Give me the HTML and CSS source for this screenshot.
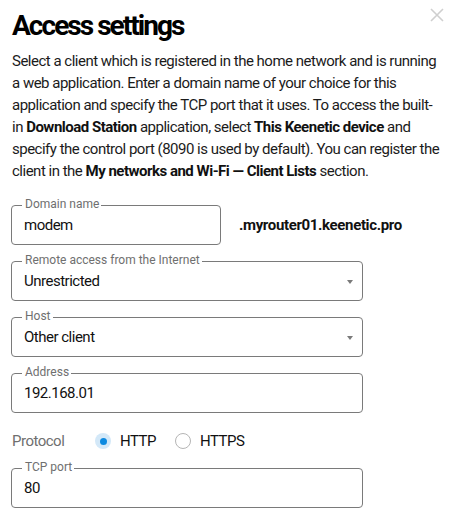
FILE: index.html
```html
<!DOCTYPE html>
<html>
<head>
<meta charset="utf-8">
<link rel="stylesheet" href="styles.css">
</head>
<body>
<div class="dialog">
  <button class="close" aria-label="Close">
    <svg width="14" height="14" viewBox="0 0 14 14"><path d="M1 1L13 13M13 1L1 13" stroke="#cfcfcf" stroke-width="1.6"/></svg>
  </button>
  <h1 class="title">Access settings</h1>
  <p class="intro">Select a client which is registered in the home network and is running a web application. Enter a domain name of your choice for this application and specify the TCP port that it uses. To access the built-in <b>Download Station</b> application, select <b>This Keenetic device</b> and specify the control port (8090 is used by default). You can register the client in the <b>My networks and Wi-Fi — Client Lists</b> section.</p>

  <div class="form">
    <div class="row">
      <div class="field field-short">
        <span class="label">Domain name</span>
        <span class="value">modem</span>
      </div>
      <span class="suffix">.myrouter01.keenetic.pro</span>
    </div>
    <div class="field field-select">
      <span class="label">Remote access from the Internet</span>
      <span class="value">Unrestricted</span>
      <span class="arrow"></span>
    </div>
    <div class="field field-select">
      <span class="label">Host</span>
      <span class="value">Other client</span>
      <span class="arrow"></span>
    </div>
    <div class="field">
      <span class="label">Address</span>
      <span class="value">192.168.01</span>
    </div>
    <div class="protocol">
      <span class="protocol-label">Protocol</span>
      <span class="radio radio-on"><span class="dot"></span></span>
      <span class="radio-text">HTTP</span>
      <span class="radio radio-off"></span>
      <span class="radio-text">HTTPS</span>
    </div>
    <div class="field">
      <span class="label">TCP port</span>
      <span class="value">80</span>
    </div>
  </div>
</div>
</body>
</html>
```

FILE: styles.css
```css
html, body {
  margin: 0;
  padding: 0;
  background: #fff;
}
body {
  font-family: Roboto, "Liberation Sans", sans-serif;
  color: #1b1b1b;
  width: 453px;
  height: 516px;
  overflow: hidden;
}
.dialog {
  position: relative;
  padding: 9px 12px 0 12px;
}
.close {
  position: absolute;
  top: 8px;
  right: 9px;
  border: 0;
  background: none;
  padding: 0;
  width: 14px;
  height: 14px;
  display: block;
}
.close svg { display: block; }
.title {
  margin: 0;
  font-size: 28px;
  line-height: 34px;
  font-weight: 700;
  letter-spacing: -1.95px;
  color: #000;
}
.intro {
  margin: 7px 0 0 0;
  font-size: 15px;
  line-height: 22px;
  letter-spacing: -0.5px;
  color: #1b1b1b;
}
.intro b {
  font-weight: 700;
  color: #111;
}
.form {
  margin-top: 23px;
  margin-left: -1px;
  display: flex;
  flex-direction: column;
  gap: 16px;
}
.row {
  display: flex;
  align-items: center;
  gap: 18px;
}
.field {
  position: relative;
  box-sizing: border-box;
  width: 352px;
  height: 40px;
  border: 1px solid #7a7a7a;
  border-radius: 4px;
  padding: 0 12px;
  display: flex;
  align-items: center;
}
.field-short {
  width: 210px;
}
.label {
  position: absolute;
  left: 10px;
  top: -9px;
  padding: 0 2px 0 3px;
  background: #fff;
  font-size: 12px;
  line-height: 15px;
  color: #6f6f6f;
}
.value {
  font-size: 15px;
  line-height: 20px;
  letter-spacing: -0.5px;
  color: #111;
}
.suffix {
  font-size: 15px;
  font-weight: 700;
  letter-spacing: -0.35px;
  color: #111;
}
.arrow {
  position: absolute;
  right: 9px;
  top: 18px;
  width: 0;
  height: 0;
  border-left: 3.5px solid transparent;
  border-right: 3.5px solid transparent;
  border-top: 4px solid #7a7a7a;
}
.protocol {
  display: flex;
  align-items: center;
  height: 24px;
  margin: 0 0 -1px 1px;
  font-size: 15px;
  letter-spacing: -0.5px;
}
.protocol-label {
  color: #6f6f6f;
  width: 83px;
}
.radio {
  box-sizing: border-box;
  width: 16px;
  height: 16px;
  border-radius: 50%;
  display: flex;
  align-items: center;
  justify-content: center;
}
.radio-on {
  background: #d3e8f8;
}
.radio-on .dot {
  width: 7px;
  height: 7px;
  border-radius: 50%;
  background: #0d8ae0;
}
.radio-off {
  border: 1px solid #b5b5b5;
  margin-left: 19px;
}
.radio-text {
  color: #111;
  margin-left: 9px;
}
```
